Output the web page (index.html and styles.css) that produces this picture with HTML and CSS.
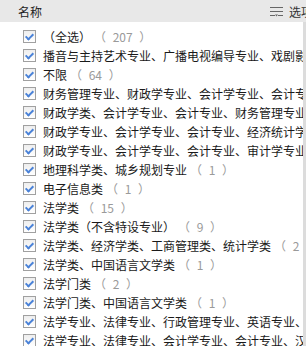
FILE: index.html
```html
<!DOCTYPE html>
<html lang="zh-CN">
<head>
    <meta charset="UTF-8">
    <meta name="viewport" content="width=device-width, initial-scale=1.0">
    <title>名称筛选</title>
    <link rel="stylesheet" href="styles.css">
</head>
<body>
    <div class="panel">
        <div class="panel-head">
            <span class="head-title">名称</span>
            <span class="head-opt">
                <svg class="opt-icon" width="13" height="11" viewBox="0 0 13 11">
                    <path d="M0 1.5h13M0 5.5h13M0 9.5h5M8 9.5h5" stroke="#666" stroke-width="1"/>
                    <path d="M5 8.5h3l-1.5 2z" fill="#666"/>
                </svg>
                选项
            </span>
        </div>

        <ul class="filter-list">
            <li class="item"><span class="cb"></span><span class="name">（全选）</span><span class="count">（ 207 ）</span></li>
            <li class="item"><span class="cb"></span><span class="name">播音与主持艺术专业、广播电视编导专业、戏剧影视</span></li>
            <li class="item"><span class="cb"></span><span class="name">不限</span><span class="count">（ 64 ）</span></li>
            <li class="item"><span class="cb"></span><span class="name">财务管理专业、财政学专业、会计学专业、会计专业</span></li>
            <li class="item"><span class="cb"></span><span class="name">财政学类、会计学专业、会计专业、财务管理专业</span></li>
            <li class="item"><span class="cb"></span><span class="name">财政学专业、会计学专业、会计专业、经济统计学</span></li>
            <li class="item"><span class="cb"></span><span class="name">财政学专业、会计学专业、会计专业、审计学专业</span></li>
            <li class="item"><span class="cb"></span><span class="name">地理科学类、城乡规划专业</span><span class="count">（ 1 ）</span></li>
            <li class="item"><span class="cb"></span><span class="name">电子信息类</span><span class="count">（ 1 ）</span></li>
            <li class="item"><span class="cb"></span><span class="name">法学类</span><span class="count">（ 15 ）</span></li>
            <li class="item"><span class="cb"></span><span class="name">法学类（不含特设专业）</span><span class="count">（ 9 ）</span></li>
            <li class="item"><span class="cb"></span><span class="name">法学类、经济学类、工商管理类、统计学类</span><span class="count">（ 2 ）</span></li>
            <li class="item"><span class="cb"></span><span class="name">法学类、中国语言文学类</span><span class="count">（ 1 ）</span></li>
            <li class="item"><span class="cb"></span><span class="name">法学门类</span><span class="count">（ 2 ）</span></li>
            <li class="item"><span class="cb"></span><span class="name">法学门类、中国语言文学类</span><span class="count">（ 1 ）</span></li>
            <li class="item"><span class="cb"></span><span class="name">法学专业、法律专业、行政管理专业、英语专业、</span></li>
            <li class="item"><span class="cb"></span><span class="name">法学专业、法律专业、会计学专业、会计专业、汉</span></li>
        </ul>
    </div>
</body>
</html>
```

FILE: styles.css
```css
body {
    margin: 0;
    background: #fff;
    font-family: "Noto Sans CJK SC", "DejaVu Sans", sans-serif;
    font-size: 12px;
    color: #1a1a1a;
}

.panel {
    width: 306px;
    height: 346px;
    overflow: hidden;
}

.panel-head {
    display: flex;
    justify-content: space-between;
    align-items: center;
    height: 22px;
    padding-left: 18px;
    background: #e8e8e8;
    white-space: nowrap;
    overflow: hidden;
}

.head-title {
    color: #222;
}

.head-opt {
    display: flex;
    align-items: center;
    gap: 6px;
    width: 36px;
    flex-shrink: 0;
    overflow: hidden;
    color: #333;
}

.opt-icon {
    flex-shrink: 0;
}

.filter-list {
    list-style: none;
    margin: 0;
    padding: 5px 0 0 0;
    width: 303px;
    border-right: 3px solid #dcdcdc;
    height: 330px;
}

.item {
    display: flex;
    align-items: center;
    height: 19px;
    padding-left: 23px;
    white-space: nowrap;
    overflow: hidden;
}

/* checked box */
.cb {
    position: relative;
    flex-shrink: 0;
    width: 11px;
    height: 11px;
    border: 1px solid #a0a0a0;
    background: linear-gradient(#eeeeee, #ffffff);
    margin-right: 7px;
}

.cb::after {
    content: "";
    position: absolute;
    left: 3px;
    top: 1px;
    width: 3px;
    height: 6px;
    border-right: 2px solid #4a82d8;
    border-bottom: 2px solid #4a82d8;
    transform: rotate(45deg);
}

.name {
    line-height: 19px;
}

.count {
    color: #9a9a9a;
    margin-left: 3px;
    word-spacing: 4px;
}
```
